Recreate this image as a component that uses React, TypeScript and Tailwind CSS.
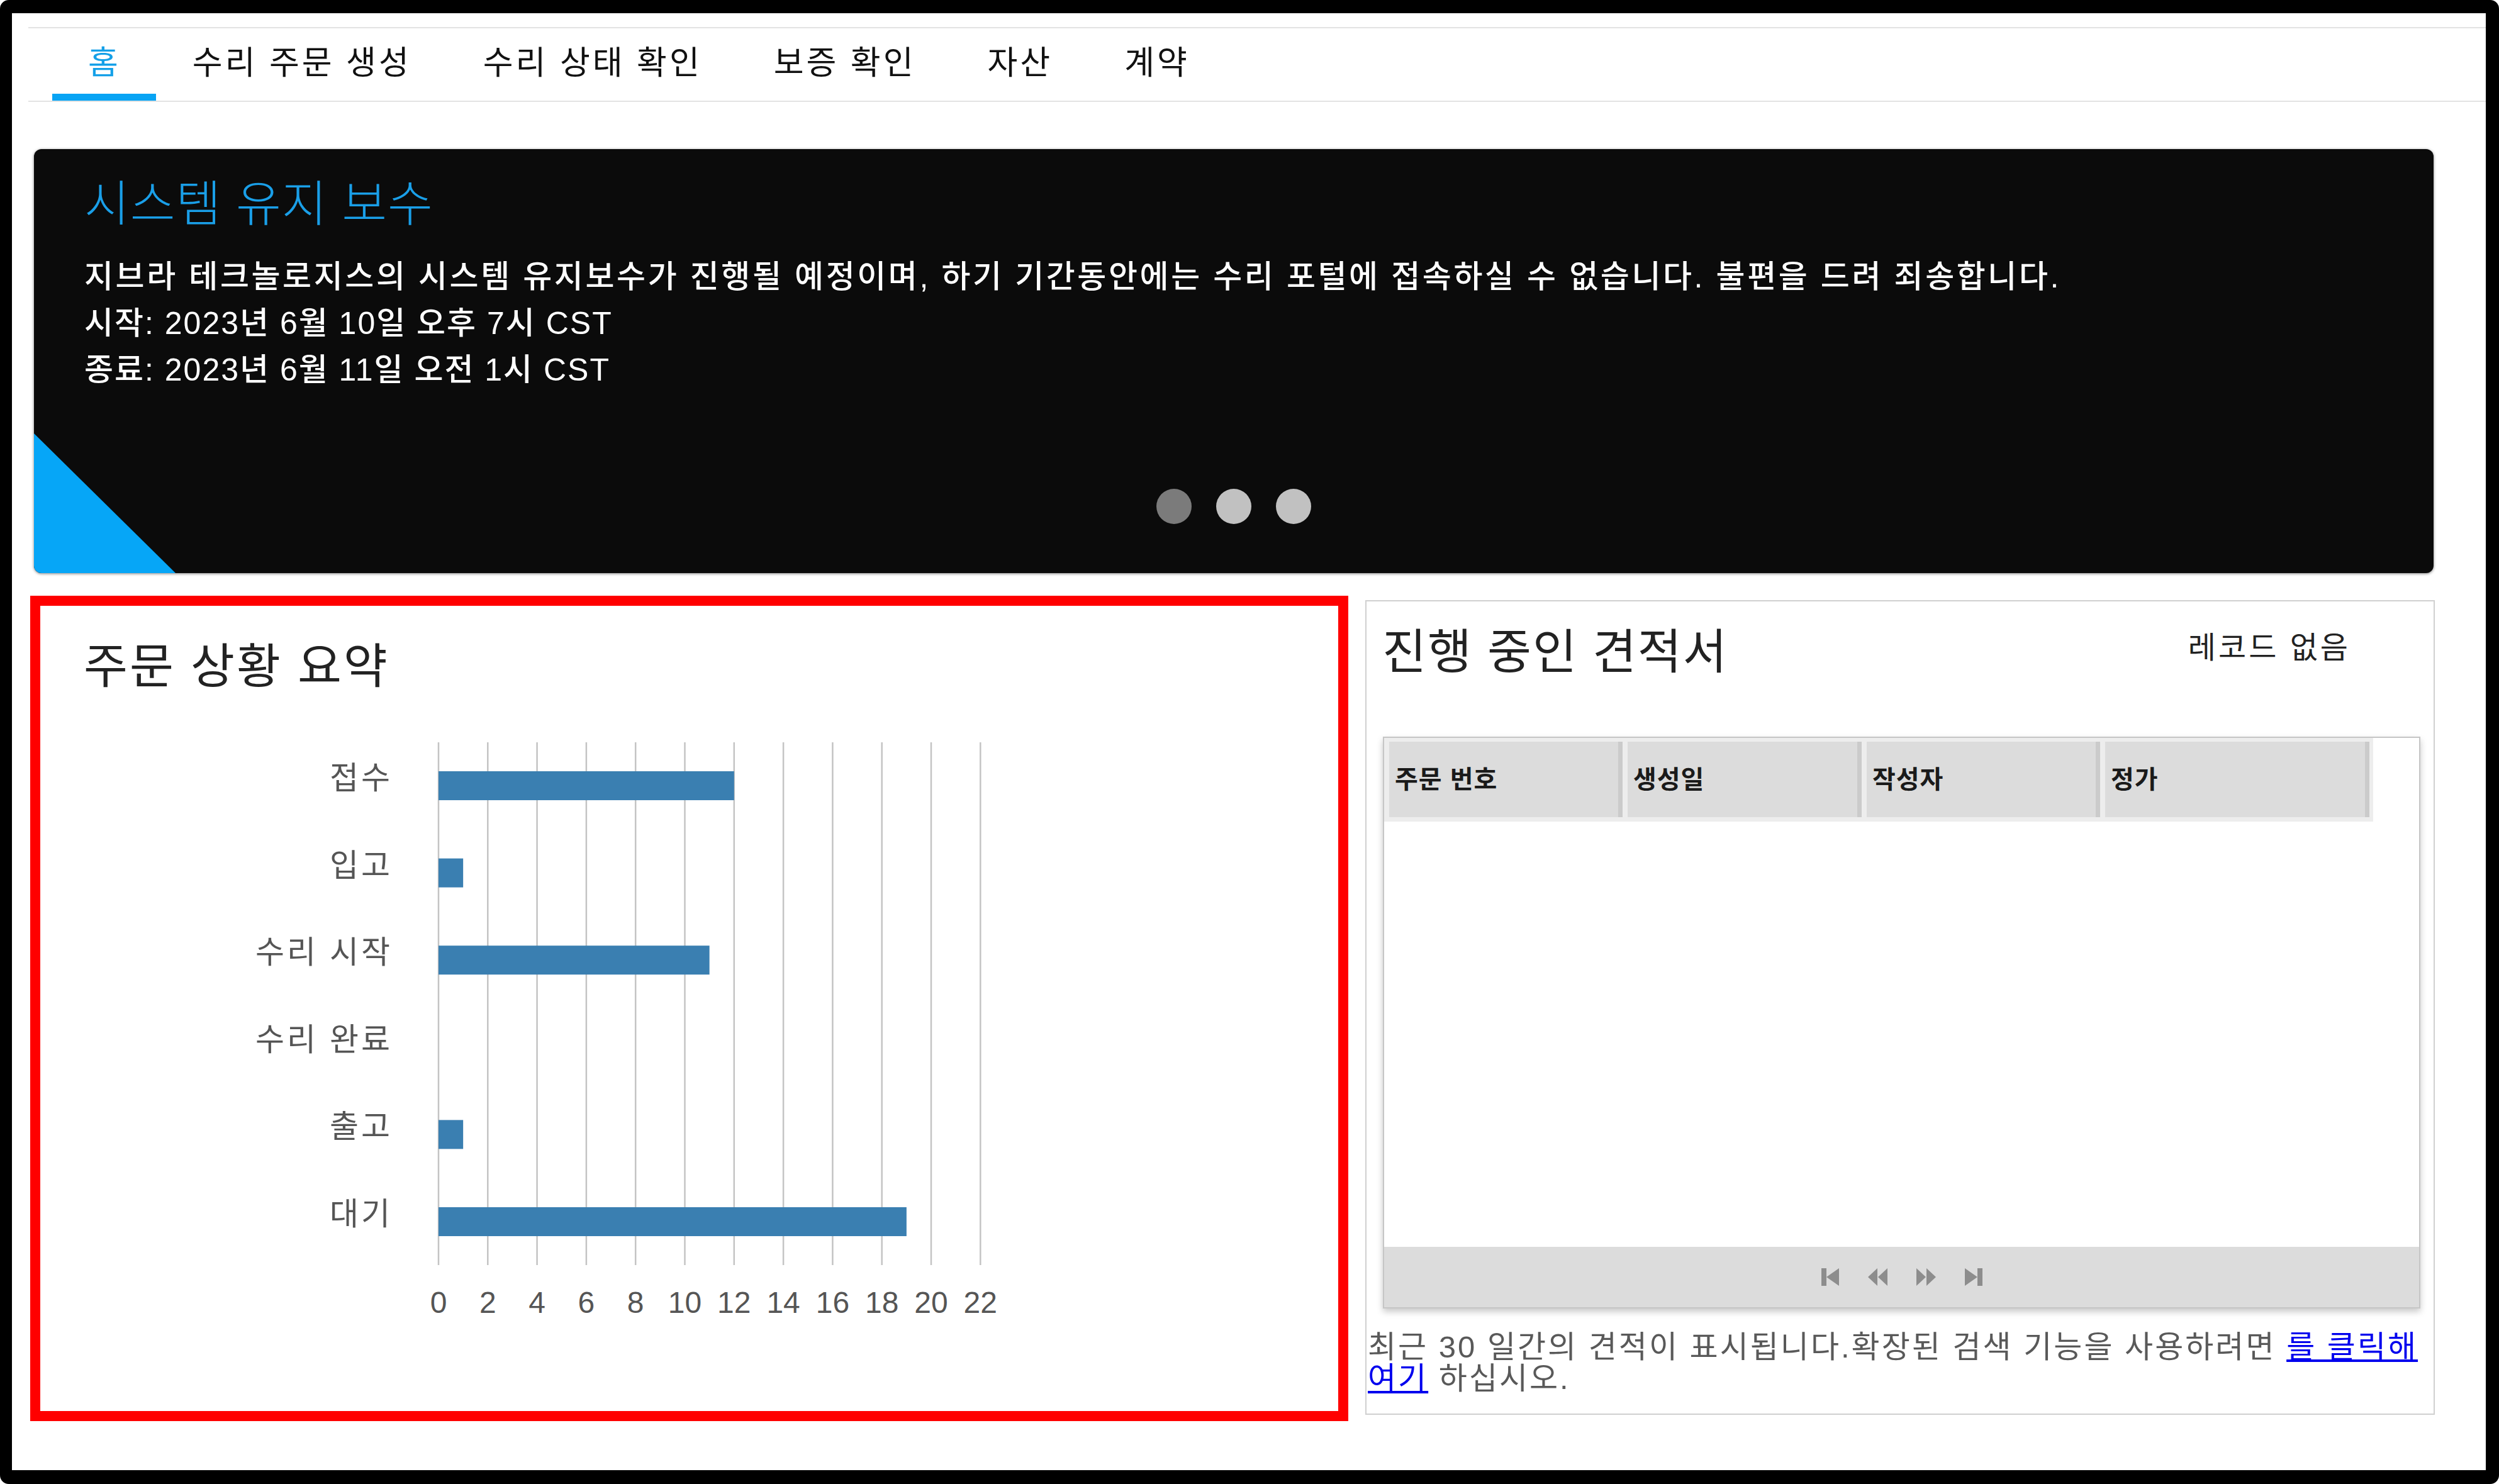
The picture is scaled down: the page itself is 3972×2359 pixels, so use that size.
import React from 'react'

const tabs = ['홈', '수리 주문 생성', '수리 상태 확인', '보증 확인', '자산', '계약']

const rows = [
  { label: '접수', value: 12 },
  { label: '입고', value: 1 },
  { label: '수리 시작', value: 11 },
  { label: '수리 완료', value: 0 },
  { label: '출고', value: 1 },
  { label: '대기', value: 19 },
]

const ticks = [0, 2, 4, 6, 8, 10, 12, 14, 16, 18, 20, 22]

// chart geometry (px inside the svg)
const X0 = 633
const UNIT = 39.15
const ROW = 138.6

function StatusChart() {
  return (
    <svg width={1700} height={960} className="block">
      {ticks.map((t) => (
        <line
          key={t}
          x1={X0 + t * UNIT}
          x2={X0 + t * UNIT}
          y1={30}
          y2={861}
          stroke="#c4c4c4"
          strokeWidth={2.5}
        />
      ))}
      {rows.map((r, i) => (
        <g key={r.label}>
          {r.value > 0 && (
            <rect x={X0} y={76 + i * ROW} width={r.value * UNIT} height={46} fill="#3a7fb1" />
          )}
          <text
            x={560}
            y={86 + i * ROW + 18}
            fontSize={50}
            letterSpacing={4}
            fill="#555"
            textAnchor="end"
          >
            {r.label}
          </text>
        </g>
      ))}
      {ticks.map((t) => (
        <text key={t} x={X0 + t * UNIT} y={937} fontSize={48} fill="#555" textAnchor="middle">
          {t}
        </text>
      ))}
    </svg>
  )
}

function PagerIcon({ kind }: { kind: 'first' | 'prev' | 'next' | 'last' }) {
  const fill = '#8d8d8d'
  if (kind === 'first')
    return (
      <svg width={28} height={28} viewBox="0 0 28 28">
        <rect x={0} y={0} width={8} height={28} fill={fill} />
        <polygon points="28,0 28,28 8,14" fill={fill} />
      </svg>
    )
  if (kind === 'prev')
    return (
      <svg width={31} height={28} viewBox="0 0 31 28">
        <polygon points="15,0 15,28 0,14" fill={fill} />
        <polygon points="31,0 31,28 16,14" fill={fill} />
      </svg>
    )
  if (kind === 'next')
    return (
      <svg width={31} height={28} viewBox="0 0 31 28">
        <polygon points="0,0 0,28 15,14" fill={fill} />
        <polygon points="16,0 16,28 31,14" fill={fill} />
      </svg>
    )
  return (
    <svg width={28} height={28} viewBox="0 0 28 28">
      <polygon points="0,0 0,28 20,14" fill={fill} />
      <rect x={20} y={0} width={8} height={28} fill={fill} />
    </svg>
  )
}

export default function App() {
  return (
    <div className="flex h-[2359px] w-[3972px] flex-col overflow-hidden rounded-[14px] border-t-[21px] border-r-[21px] border-b-[22px] border-l-[19px] border-black bg-white font-['Liberation_Sans','Noto_Sans_CJK_KR',sans-serif] text-[#222]">
      {/* tabs */}
      <nav className="mt-[22px] ml-[26px] flex h-[119px] shrink-0 border-y-2 border-[#e3e3e3] pl-[38px]">
        {tabs.map((t, i) => (
          <div
            key={t}
            className={
              i === 0
                ? 'flex h-full items-center border-b-[11px] border-[#08a4f4] pt-[6px] pr-[56px] pl-[57px] text-[52px] tracking-[4px] text-[#14a0e8]'
                : 'flex h-full items-center border-b-[11px] border-transparent pt-[6px] pr-[56px] pl-[58px] text-[52px] tracking-[4px] text-[#111]'
            }
          >
            {t}
          </div>
        ))}
      </nav>

      {/* maintenance banner */}
      <section className="relative mt-[75px] ml-[35px] flex h-[674px] w-[3814px] shrink-0 flex-col overflow-hidden rounded-[12px] bg-[#0b0b0b] px-[80px] pt-[38px] shadow-[0_1px_4px_rgba(0,0,0,0.5)]">
        <h2 className="text-[78px] leading-[100px] font-light tracking-[1px] text-[#1a9fe8]">시스템 유지 보수</h2>
        <div className="mt-[28px] text-[50px] leading-[74px] font-medium text-white">
          <p className="tracking-[3.6px]">
            지브라 테크놀로지스의 시스템 유지보수가 진행될 예정이며, 하기 기간동안에는 수리 포털에 접속하실 수 없습니다.
            불편을 드려 죄송합니다.
          </p>
          <p className="tracking-[2px]">시작: 2023년 6월 10일 오후 7시 CST</p>
          <p className="tracking-[2px]">종료: 2023년 6월 11일 오전 1시 CST</p>
        </div>
        <div className="mt-auto mb-[78px] flex justify-center gap-[39px]">
          <span className="size-[56px] rounded-full bg-[#7b7b7b]" />
          <span className="size-[56px] rounded-full bg-[#c1c1c1]" />
          <span className="size-[56px] rounded-full bg-[#c1c1c1]" />
        </div>
        <svg width={225} height={222} className="absolute bottom-0 left-0">
          <polygon points="0,0 0,222 225,222" fill="#06a6f7" />
        </svg>
      </section>

      <div className="mt-[36px] flex items-start">
        {/* order status summary */}
        <section className="ml-[29px] flex h-[1312px] w-[2095px] shrink-0 flex-col border-[16px] border-[#ff0000] bg-white">
          <h3 className="pt-[52px] pl-[69px] text-[76px] leading-[90px] tracking-[3px] text-[#222]">주문 상황 요약</h3>
          <div className="mt-[45px]">
            <StatusChart />
          </div>
        </section>

        {/* quotes in progress */}
        <section className="mt-[7px] ml-[27px] flex h-[1295px] w-[1700px] shrink-0 flex-col border-2 border-[#d0d0d0] bg-white">
          <div className="flex items-start pt-[36px] pr-[132px] pl-[25px]">
            <h3 className="text-[76px] leading-[90px] tracking-[2px] text-[#222]">진행 중인 견적서</h3>
            <span className="ml-auto text-[48px] leading-[76px] tracking-[4px] text-[#222]">레코드 없음</span>
          </div>

          <div className="mt-[89px] ml-[26px] w-[1649px] border-2 border-[#c6c6c6] shadow-[0_5px_10px_rgba(0,0,0,0.22)]">
            <div className="flex w-[1572px] gap-[8px] bg-[#ededed] pt-[6px] pb-[7px] pl-[8px]">
              {[
                { t: '주문 번호', w: 'w-[371px]' },
                { t: '생성일', w: 'w-[372px]' },
                { t: '작성자', w: 'w-[371px]' },
                { t: '정가', w: 'w-[420px]' },
              ].map((c) => (
                <div
                  key={c.t}
                  className={`${c.w} flex h-[120px] items-center border-r-[7px] border-[#cbcbcb] bg-[#dcdcdc] pl-[9px] text-[40px] font-bold tracking-[1px] text-[#1a1a1a]`}
                >
                  {c.t}
                </div>
              ))}
            </div>
            <div className="h-[676px]" />
            <div className="flex h-[96px] items-center justify-center gap-[46px] bg-[#dcdcdc]">
              <PagerIcon kind="first" />
              <PagerIcon kind="prev" />
              <PagerIcon kind="next" />
              <PagerIcon kind="last" />
            </div>
          </div>

          <p className="mt-[36px] pl-[2px] text-[49px] leading-[50px] tracking-[3px] whitespace-nowrap text-[#595959]">
            최근 30 일간의 견적이 표시됩니다.확장된 검색 기능을 사용하려면{' '}
            <a href="#" className="text-[#0000ee] underline">
              를 클릭해
              <br />
              여기
            </a>{' '}
            하십시오.
          </p>
        </section>
      </div>
    </div>
  )
}
